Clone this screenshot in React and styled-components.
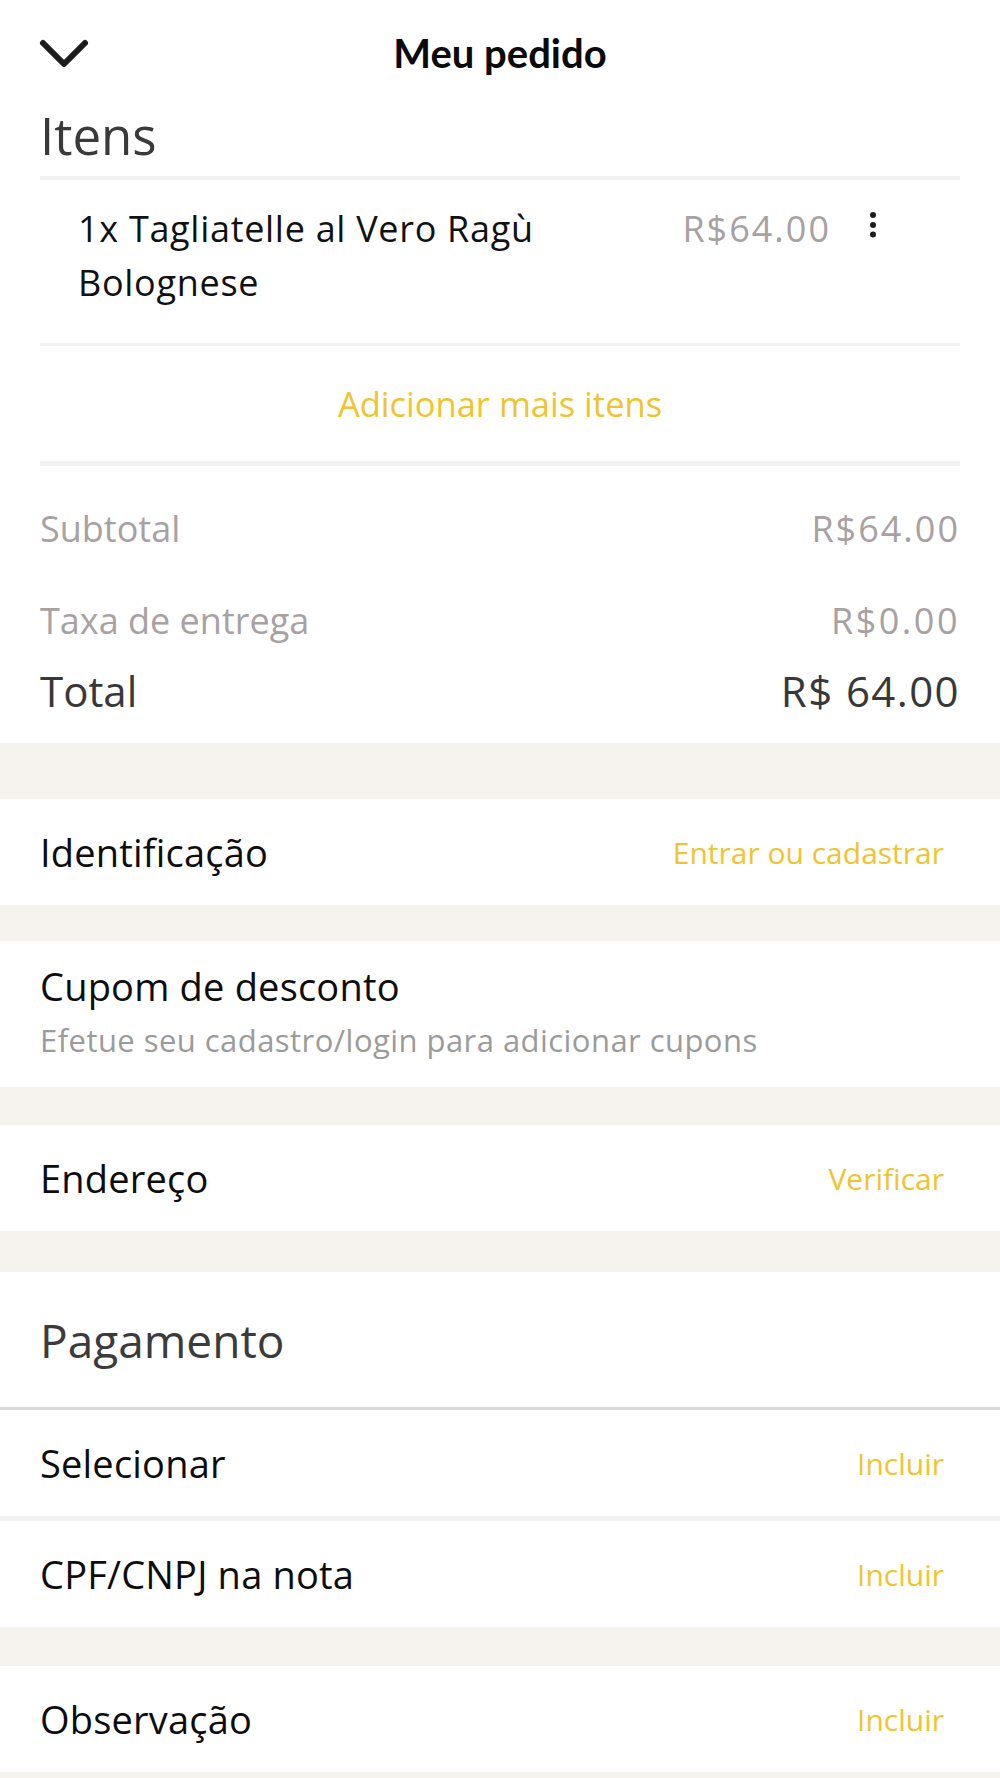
import React from 'react';
import styled, { createGlobalStyle } from 'styled-components';

const GlobalStyle = createGlobalStyle`
  html, body {
    margin: 0;
    padding: 0;
    background: #ffffff;
  }
  body {
    font-family: "Open Sans", Lato, "Noto Sans", sans-serif;
    color: #111111;
    -webkit-font-smoothing: antialiased;
  }
  * {
    box-sizing: border-box;
  }
`;

const YELLOW = '#efc431';
const GREY = '#a8a1a2';
const BAND = '#f6f2ee';

const Page = styled.div`
  width: 1000px;
  background: #ffffff;
`;

const Header = styled.header`
  height: 106px;
  display: flex;
  align-items: center;
  justify-content: center;
  position: relative;
`;

const BackButton = styled.button`
  position: absolute;
  left: 36px;
  top: 34px;
  width: 56px;
  height: 40px;
  padding: 0;
  border: none;
  background: none;
  display: flex;
  align-items: center;
  justify-content: center;
`;

const Title = styled.h1`
  margin: 0;
  font-family: Lato, "Open Sans", sans-serif;
  font-size: 40px;
  line-height: 40px;
  font-weight: 700;
  color: #0a0a0a;
`;

const Section = styled.section`
  padding: 0 40px;
`;

const SectionTitle = styled.h2`
  margin: 0;
  padding: 3px 0 15px;
  font-size: 51px;
  line-height: 52px;
  font-weight: 400;
  color: #3a3a3a;
`;

const Divider = styled.div`
  height: ${({ size }) => size}px;
  background: ${({ color }) => color || '#f2f2f2'};
`;

const ItemRow = styled.div`
  display: flex;
  align-items: flex-start;
  padding: 22px 0 33px 38px;
`;

const ItemName = styled.div`
  width: 500px;
  font-size: 36px;
  line-height: 54px;
  letter-spacing: 0.7px;
  color: #111111;
`;

const Amount = styled.span`
  letter-spacing: ${({ spacing }) => spacing || 2}px;
`;

const ItemPrice = styled(Amount)`
  margin-left: auto;
  font-size: 36px;
  line-height: 54px;
  color: ${GREY};
`;

const Kebab = styled.button`
  width: 26px;
  height: 34px;
  margin: 8px 74px 0 29px;
  padding: 0;
  border: none;
  background: none;
  display: flex;
  justify-content: center;
`;

const AddMore = styled.div`
  height: 115px;
  display: flex;
  align-items: center;
  justify-content: center;
  font-size: 34.5px;
  color: ${YELLOW};
`;

const Totals = styled.div`
  padding: 36px 0 25px;
`;

const TotalLine = styled.div`
  display: flex;
  justify-content: space-between;
  font-size: ${({ strong }) => (strong ? 42 : 36)}px;
  line-height: 54px;
  color: ${({ strong }) => (strong ? '#383838' : GREY)};
  margin-top: ${({ gap }) => gap || 0}px;
`;

const Band = styled.div`
  height: ${({ size }) => size}px;
  background: ${BAND};
`;

const Row = styled.div`
  height: ${({ height }) => height || 106}px;
  padding: 0 56px 0 40px;
  display: flex;
  align-items: center;
  justify-content: space-between;
`;

const RowLabel = styled.span`
  font-size: 38px;
  letter-spacing: 0.2px;
  color: #0d0d0d;
`;

const RowAction = styled.span`
  font-size: 30px;
  color: ${YELLOW};
`;

const CouponBlock = styled.div`
  padding: 22px 40px 27px;
`;

const CouponTitle = styled.div`
  font-size: 38px;
  line-height: 46px;
  letter-spacing: 0.2px;
  color: #0d0d0d;
`;

const CouponHint = styled.div`
  margin-top: 11px;
  font-size: 31px;
  line-height: 40px;
  letter-spacing: 0.45px;
  color: #9b9b9b;
`;

const PaymentTitle = styled.h2`
  margin: 0;
  height: 135px;
  padding: 0 40px;
  display: flex;
  align-items: center;
  font-size: 46px;
  font-weight: 400;
  color: #3b3b3b;
`;

const ChevronDown = () => (
  <svg width="52" height="34" viewBox="0 0 52 34" fill="none">
    <path
      d="M5 6 L26 27 L47 6"
      stroke="#1c1c1c"
      strokeWidth="6"
      strokeLinecap="round"
      strokeLinejoin="round"
    />
  </svg>
);

const DotsIcon = () => (
  <svg width="10" height="30" viewBox="0 0 10 30">
    <circle cx="5" cy="5" r="3" fill="#1c1c1c" />
    <circle cx="5" cy="15" r="3" fill="#1c1c1c" />
    <circle cx="5" cy="24.5" r="3" fill="#1c1c1c" />
  </svg>
);

const ActionRow = ({ label, action }) => (
  <Row>
    <RowLabel>{label}</RowLabel>
    <RowAction>{action}</RowAction>
  </Row>
);

export default function App() {
  return (
    <Page>
      <GlobalStyle />
      <Header>
        <BackButton aria-label="Fechar">
          <ChevronDown />
        </BackButton>
        <Title>Meu pedido</Title>
      </Header>

      <Section>
        <SectionTitle>Itens</SectionTitle>
        <Divider size={4} />
        <ItemRow>
          <ItemName>1x Tagliatelle al Vero Ragù Bolognese</ItemName>
          <ItemPrice>R$64.00</ItemPrice>
          <Kebab aria-label="Opções">
            <DotsIcon />
          </Kebab>
        </ItemRow>
        <Divider size={3} />
        <AddMore>Adicionar mais itens</AddMore>
        <Divider size={5} />
        <Totals>
          <TotalLine>
            <span>Subtotal</span>
            <Amount>R$64.00</Amount>
          </TotalLine>
          <TotalLine gap={38}>
            <span>Taxa de entrega</span>
            <Amount spacing={2.5}>R$0.00</Amount>
          </TotalLine>
          <TotalLine gap={16} strong>
            <span>Total</span>
            <Amount spacing={1.4}>R$ 64.00</Amount>
          </TotalLine>
        </Totals>
      </Section>

      <Band size={56} />
      <ActionRow label="Identificação" action="Entrar ou cadastrar" />
      <Band size={36} />
      <CouponBlock>
        <CouponTitle>Cupom de desconto</CouponTitle>
        <CouponHint>Efetue seu cadastro/login para adicionar cupons</CouponHint>
      </CouponBlock>
      <Band size={38} />
      <ActionRow label="Endereço" action="Verificar" />
      <Band size={41} />
      <PaymentTitle>Pagamento</PaymentTitle>
      <Divider size={3} color="#d9d9d9" />
      <ActionRow label="Selecionar" action="Incluir" />
      <Divider size={5} />
      <ActionRow label="CPF/CNPJ na nota" action="Incluir" />
      <Band size={39} />
      <ActionRow label="Observação" action="Incluir" />
      <Band size={40} />
    </Page>
  );
}
